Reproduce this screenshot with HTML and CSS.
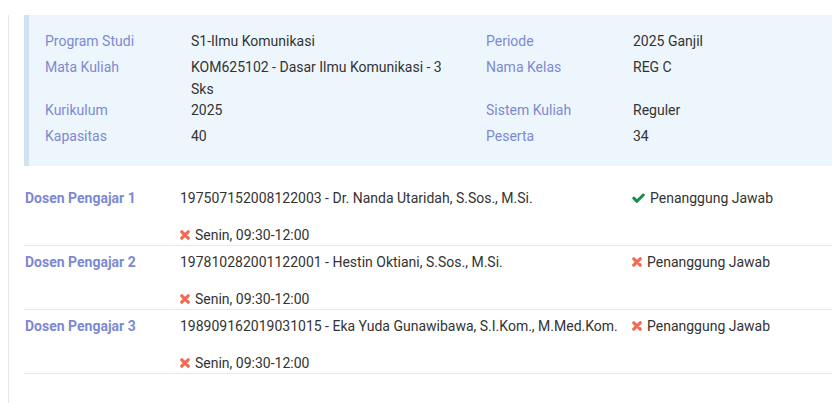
FILE: index.html
```html
<!DOCTYPE html>
<html lang="id">
<head>
<meta charset="utf-8">
<title>Detail Kelas</title>
<link rel="stylesheet" href="styles.css">
</head>
<body>
<div class="page">
  <div class="info">
    <div class="info-grid">
      <div class="lbl">Program Studi</div><div class="val">S1-Ilmu Komunikasi</div>
      <div class="lbl">Periode</div><div class="val">2025 Ganjil</div>

      <div class="lbl">Mata Kuliah</div><div class="val">KOM625102 - Dasar Ilmu Komunikasi - 3 Sks</div>
      <div class="lbl">Nama Kelas</div><div class="val">REG C</div>

      <div class="lbl">Kurikulum</div><div class="val">2025</div>
      <div class="lbl">Sistem Kuliah</div><div class="val">Reguler</div>

      <div class="lbl">Kapasitas</div><div class="val">40</div>
      <div class="lbl">Peserta</div><div class="val">34</div>
    </div>
  </div>

  <div class="dosen">
    <div class="drow">
      <div class="dlabel">Dosen Pengajar 1</div>
      <div class="dmain">
        <div>197507152008122003 - Dr. Nanda Utaridah, S.Sos., M.Si.</div>
        <div class="sched"><svg class="ic-x" viewBox="0 0 10 10"><path d="M1.8 1.8L8.2 8.2M8.2 1.8L1.8 8.2"/></svg>Senin, 09:30-12:00</div>
      </div>
      <div class="dstatus"><svg class="ic-check" viewBox="0 0 13 10"><path d="M1.8 5.2L5 8.3L11.3 2"/></svg>Penanggung Jawab</div>
    </div>
    <div class="drow">
      <div class="dlabel">Dosen Pengajar 2</div>
      <div class="dmain">
        <div>197810282001122001 - Hestin Oktiani, S.Sos., M.Si.</div>
        <div class="sched"><svg class="ic-x" viewBox="0 0 10 10"><path d="M1.8 1.8L8.2 8.2M8.2 1.8L1.8 8.2"/></svg>Senin, 09:30-12:00</div>
      </div>
      <div class="dstatus"><svg class="ic-x" viewBox="0 0 10 10"><path d="M1.8 1.8L8.2 8.2M8.2 1.8L1.8 8.2"/></svg>Penanggung Jawab</div>
    </div>
    <div class="drow">
      <div class="dlabel">Dosen Pengajar 3</div>
      <div class="dmain">
        <div>198909162019031015 - Eka Yuda Gunawibawa, S.I.Kom., M.Med.Kom.</div>
        <div class="sched"><svg class="ic-x" viewBox="0 0 10 10"><path d="M1.8 1.8L8.2 8.2M8.2 1.8L1.8 8.2"/></svg>Senin, 09:30-12:00</div>
      </div>
      <div class="dstatus"><svg class="ic-x" viewBox="0 0 10 10"><path d="M1.8 1.8L8.2 8.2M8.2 1.8L1.8 8.2"/></svg>Penanggung Jawab</div>
    </div>
  </div>
</div>
</body>
</html>
```

FILE: styles.css
```css
* { box-sizing: border-box; }

html, body {
  margin: 0;
  padding: 0;
  background: #ffffff;
}

body {
  font-family: Roboto, "Liberation Sans", sans-serif;
  font-size: 14px;
  color: #333333;
}

.page {
  margin: 15px 0 0 8px;
  border-left: 1px solid #e7e7e7;
  padding-left: 15px;
  min-height: calc(100vh - 15px);
}

.info {
  background: #eef6fd;
  border-left: 5px solid #cfe3f0;
  padding: 16px 16px 14px 16px;
}

.info-grid {
  display: grid;
  grid-template-columns: 146px 295px 147px 1fr;
  grid-auto-rows: minmax(26px, auto);
  align-items: start;
  line-height: 21.5px;
}

.lbl {
  color: #7d89d2;
}

.val {
  color: #333333;
  padding-right: 24px;
}

.dosen {
  margin-top: 16px;
}

.drow {
  display: grid;
  grid-template-columns: 155px 452px 1fr;
  padding: 6px 0 0 1px;
  border-bottom: 1px solid #e8e8e8;
  line-height: 20px;
}

.dlabel {
  color: #7d89d2;
  font-weight: 700;
}

.dmain {
  white-space: nowrap;
}

.sched {
  margin-top: 17px;
  display: flex;
  align-items: center;
}

.dstatus {
  display: flex;
  align-items: flex-start;
  white-space: nowrap;
}

.dstatus svg {
  margin-top: 5px;
}

.ic-x {
  width: 10px;
  height: 10px;
  margin-right: 5px;
  flex: none;
}

.ic-x path {
  fill: none;
  stroke: #f56954;
  stroke-width: 3.2;
  stroke-linecap: round;
}

.ic-check {
  width: 13px;
  height: 10px;
  margin-right: 5px;
  flex: none;
}

.ic-check path {
  fill: none;
  stroke: #1a8c47;
  stroke-width: 3;
  stroke-linecap: round;
  stroke-linejoin: round;
}
```
